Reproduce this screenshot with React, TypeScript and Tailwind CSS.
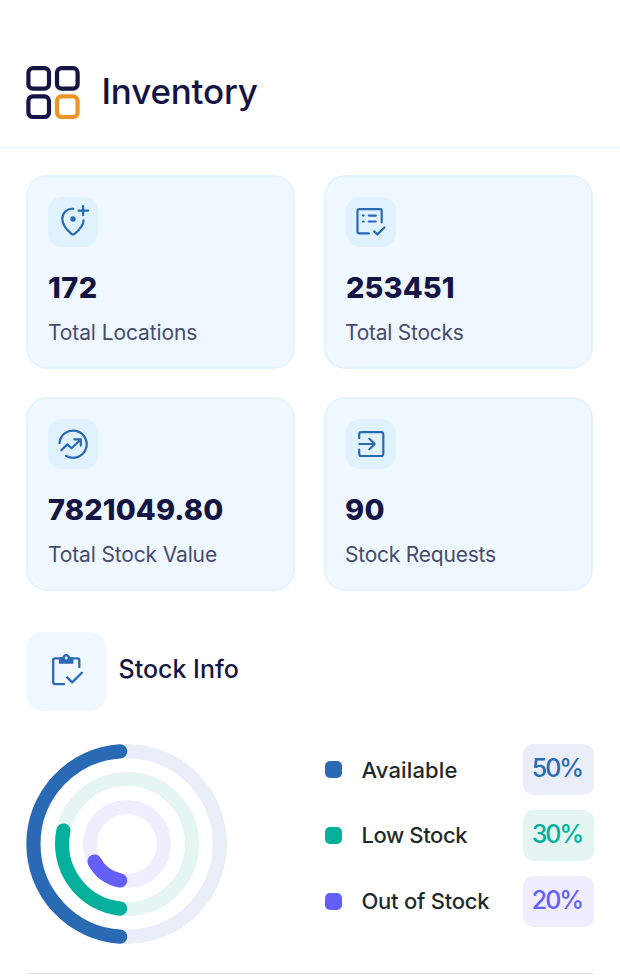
import clsx from 'clsx'
import type { FC, ReactNode } from 'react'

type StatProps = {
  icon: ReactNode
  value: string
  label: string
  valueClass?: string
  labelClass?: string
}

type LegendItem = {
  label: string
  percent: string
  dot: string
  pill: string
  labelClass: string
}

const iconProps = {
  className: 'h-[50px] w-[50px]',
  viewBox: '0 0 50 50',
  fill: 'none',
  stroke: '#2a6ab4',
  strokeWidth: 2.2,
  strokeLinecap: 'round',
  strokeLinejoin: 'round'
} as const

const LocationIcon = () => (
  <svg {...iconProps}>
    <path d="M25.2 11.8C18.8 11.3 14.2 16.2 14.3 21.8C14.4 27.6 19.6 33.7 23.5 36.8Q25 38 26.5 36.8C30.4 33.7 35.5 28.4 35.5 23.4" />
    <path d="M35.1 9v9.2M30.5 13.6h9.7" />
    <circle cx="25" cy="22" r="2.7" fill="#2a6ab4" stroke="none" />
  </svg>
)

const ListIcon = () => (
  <svg {...iconProps}>
    <path d="M22.8 36.4H13.3Q11.5 36.4 11.5 34.6V14Q11.5 12.2 13.3 12.2H33.9Q35.7 12.2 35.7 14V25.4" />
    <path d="M17 18.6h.7M17 24.5h.7M22.8 18.6h7M22.8 24.5h7M28.1 34.4l3.3 3 7-6.9" />
  </svg>
)

const TrendIcon = () => (
  <svg {...iconProps}>
    <path d="M11.5 24.2A13.6 13.6 0 1 1 18 36.8" />
    <path d="M13.3 31.3l6-5.9 4.3 3.9 8.9-8.6M26.3 20.3h6.5v6.3" />
  </svg>
)

const RequestIcon = () => (
  <svg {...iconProps}>
    <path d="M13.2 19.2V15Q13.2 13.1 15.1 13.1H35.3Q37.3 13.1 37.3 15V35Q37.3 37 35.3 37H15.1Q13.2 37 13.2 35V30.7" />
    <path d="M13.4 25h15.2M23.4 19.8l5.3 5.2-5.3 5.2" />
  </svg>
)

const ClipboardIcon = () => (
  <svg
    className="h-[79px] w-[79px]"
    viewBox="0 0 79 79"
    fill="none"
    stroke="#2a6ab4"
    strokeWidth="2.3"
    strokeLinecap="round"
    strokeLinejoin="round"
  >
    <path d="M37 52.1H28.2Q26.2 52.1 26.2 50.1V28.3Q26.2 26.3 28.2 26.3H50.3Q52.3 26.3 52.3 28.3V35.2" />
    <path
      d="M32 25.4H35.2C35.7 23.5 37.3 22 39.2 22S42.7 23.5 43.2 25.4H46.4V31.8H32Z"
      fill="#2a6ab4"
      stroke="none"
    />
    <circle cx="39.2" cy="26" r="1.4" fill="#eff8ff" stroke="none" />
    <path d="M40.1 45.4l5.1 5 9.7-9.6" />
  </svg>
)

const Stat: FC<StatProps> = ({ icon, value, label, valueClass, labelClass }) => (
  <div className="h-[194px] rounded-[21px] border-2 border-[#e4f4fe] bg-[#eff8ff] px-5 pt-5">
    <div className="h-[50px] w-[50px] rounded-[14px] bg-[#e1f2ff]">{icon}</div>
    <div
      className={clsx(
        'mt-[23px] text-[29px] leading-9 font-extrabold whitespace-nowrap text-[#151545]',
        valueClass
      )}
    >
      {value}
    </div>
    <div
      className={clsx(
        'mt-3 text-[21px] leading-[30px] whitespace-nowrap text-[#484a70]',
        labelClass
      )}
    >
      {label}
    </div>
  </div>
)

const legend: LegendItem[] = [
  {
    label: 'Available',
    percent: '50%',
    dot: 'bg-[#2a6ab4]',
    pill: 'bg-[#e9eef9] text-[#2a6ab4]',
    labelClass: 'tracking-[0.15px]'
  },
  {
    label: 'Low Stock',
    percent: '30%',
    dot: 'bg-[#04b09c]',
    pill: 'bg-[#e5f6f2] text-[#04b09c]',
    labelClass: 'tracking-[-0.4px]'
  },
  {
    label: 'Out of Stock',
    percent: '20%',
    dot: 'bg-[#635ff8]',
    pill: 'bg-[#efedfe] text-[#635ff8]',
    labelClass: 'tracking-[-0.25px]'
  }
]

const Rings = () => (
  <svg
    className="h-[200px] w-[200px] overflow-visible"
    viewBox="0 0 200 200"
    fill="none"
    strokeWidth="14.2"
    strokeLinecap="round"
  >
    <circle cx="100" cy="100" r="92.9" stroke="#e9eef9" />
    <circle cx="100" cy="100" r="65" stroke="#e5f6f2" />
    <circle cx="100" cy="100" r="37" stroke="#efedfe" />
    <path d="M93.2 192.7A92.9 92.9 0 0 1 93.2 7.3" stroke="#2a6ab4" />
    <path d="M93.2 164.6A65 65 0 0 1 36.5 86.5" stroke="#04b09c" />
    <path d="M93.2 136.4A37 37 0 0 1 67.5 117.6" stroke="#635ff8" />
  </svg>
)

export default function App() {
  return (
    <div className="h-[977px] w-[620px] overflow-hidden bg-white font-['Inter',sans-serif]">
      <header className="flex h-[149px] items-start border-b-3 border-[#f3fafc] pt-[66px] pl-[26px]">
        <svg
          className="h-[54px] w-[54px]"
          viewBox="0 0 54 54"
          fill="none"
          stroke="#151545"
          strokeWidth="4.2"
        >
          <rect x="2.4" y="2.1" width="20.6" height="20.6" rx="4.5" />
          <rect x="31" y="2.1" width="20.6" height="20.6" rx="4.5" />
          <rect x="2.4" y="30.4" width="20.6" height="20.6" rx="4.5" />
          <rect x="31" y="30.4" width="20.6" height="20.6" rx="4.5" stroke="#ee9427" />
        </svg>
        <h1 className="mt-0.5 ml-[21.5px] text-[35px] leading-[46px] font-medium tracking-[-0.2px] text-[#151545]">
          Inventory
        </h1>
      </header>

      <main className="pr-[26px] pl-[26px] pt-[26px]">
        <div className="grid grid-cols-[269px_269px] gap-x-[29px] gap-y-7">
          <Stat
            icon={<LocationIcon />}
            value="172"
            label="Total Locations"
            valueClass="tracking-[0.4px]"
            labelClass="tracking-[-0.1px]"
          />
          <Stat
            icon={<ListIcon />}
            value="253451"
            label="Total Stocks"
            valueClass="tracking-[0.1px]"
            labelClass="-ml-px tracking-[-0.25px]"
          />
          <Stat
            icon={<TrendIcon />}
            value="7821049.80"
            label="Total Stock Value"
            valueClass="tracking-[0.12px]"
            labelClass="tracking-[-0.14px]"
          />
          <Stat
            icon={<RequestIcon />}
            value="90"
            label="Stock Requests"
            valueClass="-ml-px tracking-[0.3px]"
            labelClass="-ml-px tracking-[-0.22px]"
          />
        </div>

        <div className="mt-[41px] ml-[0.5px] flex">
          <div className="h-[79px] w-[79px] rounded-[16px] bg-[#eff8ff]">
            <ClipboardIcon />
          </div>
          <h2 className="mt-[21px] ml-[13px] text-[25px] leading-8 font-medium text-[#151545]">
            Stock Info
          </h2>
        </div>

        <div className="mt-[33px] ml-[0.5px] flex h-[230px] justify-between border-b border-[#e2e2e3]">
          <Rings />
          <ul className="flex w-[269px] flex-col gap-[14.8px]">
            {legend.map(item => (
              <li key={item.label} className="flex h-[51px] items-center">
                <span className={clsx('h-[17px] w-[17px] rounded-[5px]', item.dot)} />
                <span
                  className={clsx(
                    'ml-[19.5px] text-[22px] leading-7 font-medium whitespace-nowrap text-[#1f2b2b]',
                    item.labelClass
                  )}
                >
                  {item.label}
                </span>
                <span
                  className={clsx(
                    'ml-auto h-[51px] w-[71px] rounded-[10px] pr-[3px] text-center text-[25px] leading-[48px] font-medium tracking-[-2px]',
                    item.pill
                  )}
                >
                  {item.percent}
                </span>
              </li>
            ))}
          </ul>
        </div>
      </main>
    </div>
  )
}
